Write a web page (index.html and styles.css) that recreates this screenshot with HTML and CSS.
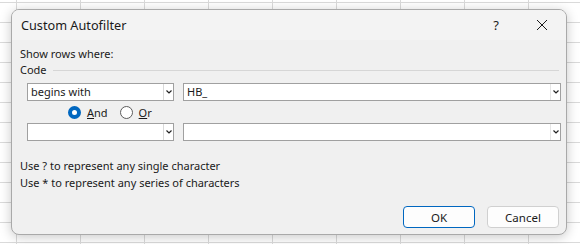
FILE: index.html
```html
<!DOCTYPE html>
<html lang="en">
<head>
    <meta charset="UTF-8">
    <title>Custom Autofilter</title>
    <link rel="stylesheet" href="styles.css">
</head>
<body>
    <div class="sheet">
        <div class="dialog">
            <div class="titlebar">
                <span class="title">Custom Autofilter</span>
                <span class="help">?</span>
                <span class="close">
                    <svg width="12" height="12" viewBox="0 0 12 12"><path d="M1 1 L11 11 M11 1 L1 11" stroke="#1a1a1a" stroke-width="1" fill="none"/></svg>
                </span>
            </div>
            <div class="content">
                <div class="caption">Show rows where:</div>
                <div class="group"><span>Code</span></div>

                <div class="criteria">
                    <div class="combo op">
                        <span class="value">begins with</span>
                        <span class="arrow"><svg width="6" height="4" viewBox="0 0 6 4"><path d="M0.5 0.5 L3 3 L5.5 0.5" stroke="#222" stroke-width="1.2" fill="none"/></svg></span>
                    </div>
                    <div class="combo val">
                        <span class="value">HB_</span>
                        <span class="arrow plain"><svg width="6" height="4" viewBox="0 0 6 4"><path d="M0.5 0.5 L3 3 L5.5 0.5" stroke="#222" stroke-width="1.2" fill="none"/></svg></span>
                    </div>
                </div>

                <div class="radios">
                    <label class="radio checked"><span class="dot"></span><span><u>A</u>nd</span></label>
                    <label class="radio"><span class="dot"></span><span><u>O</u>r</span></label>
                </div>

                <div class="criteria">
                    <div class="combo op">
                        <span class="value"></span>
                        <span class="arrow"><svg width="6" height="4" viewBox="0 0 6 4"><path d="M0.5 0.5 L3 3 L5.5 0.5" stroke="#222" stroke-width="1.2" fill="none"/></svg></span>
                    </div>
                    <div class="combo val">
                        <span class="value"></span>
                        <span class="arrow plain"><svg width="6" height="4" viewBox="0 0 6 4"><path d="M0.5 0.5 L3 3 L5.5 0.5" stroke="#222" stroke-width="1.2" fill="none"/></svg></span>
                    </div>
                </div>

                <div class="hints">
                    <div>Use ? to represent any single character</div>
                    <div>Use * to represent any series of characters</div>
                </div>

                <div class="buttons">
                    <button class="btn default">OK</button>
                    <button class="btn">Cancel</button>
                </div>
            </div>
        </div>
    </div>
</body>
</html>
```

FILE: styles.css
```css
/* Base */
* {
    box-sizing: border-box;
    margin: 0;
    padding: 0;
}
body {
    font-family: 'Noto Sans', 'Open Sans', sans-serif;
    font-size: 11px;
    color: #1a1a1a;
    background: #fff;
}
/* Spreadsheet behind the dialog */
.sheet {
    width: 580px;
    height: 244px;
    padding: 9px 0 0 11px;
    background-color: #fff;
    background-image:
        repeating-linear-gradient(to right, transparent 0, transparent 16px, #dadada 16px, #dadada 17px, transparent 17px, transparent 64px),
        repeating-linear-gradient(to bottom, transparent 0, transparent 2px, #dadada 2px, #dadada 3px, transparent 3px, transparent 20px);
    background-size: 64px 100%, 100% 20px;
}
/* Dialog */
.dialog {
    width: 556px;
    height: 226px;
    background: #f0f0f0;
    border: 1px solid #a9a9a9;
    border-radius: 8px;
    box-shadow: 0 2px 12px rgba(0,0,0,0.22);
    overflow: hidden;
}
.titlebar {
    height: 30px;
    background: #f3f3f3;
    display: flex;
    align-items: center;
    padding-left: 9px;
}
.title {
    flex: 1;
    font-size: 12.7px;
}
.help {
    width: 46px;
    text-align: center;
    font-size: 13px;
    margin-right: 0;
}
.close {
    width: 46px;
    display: flex;
    justify-content: center;
    align-items: center;
    margin-right: 1px;
}
/* Body */
.content {
    padding: 6px 0 0 8px;
}
.caption,
.group {
    line-height: 16px;
    height: 16px;
}
.group {
    display: flex;
    align-items: center;
}
.group::after {
    content: "";
    flex: 1;
    height: 1px;
    background: #d6d6d6;
    margin: 0 7px 0 6px;
}
.criteria {
    display: flex;
    margin: 5px 0 0 7px;
    gap: 9px;
}
.criteria + .radios {
    margin-top: 3px;
}
.radios + .criteria {
    margin-top: 3px;
}
.combo {
    height: 18px;
    background: #fff;
    border: 1px solid #a0a0a0;
    display: flex;
    align-items: center;
}
.combo.op {
    width: 147px;
}
.combo.val {
    width: 378px;
}
.combo .value {
    flex: 1;
    padding-left: 3px;
    line-height: 16px;
}
.combo .arrow {
    width: 10px;
    height: 100%;
    border-left: 1px solid #d9d9d9;
    display: flex;
    align-items: center;
    justify-content: center;
}
.combo .arrow.plain {
    border-left-color: #e6e6e6;
}
/* Radio buttons */
.radios {
    display: flex;
    height: 16px;
    align-items: center;
    padding-left: 48px;
}
.radio {
    display: flex;
    align-items: center;
    margin-right: 12px;
}
.radio .dot {
    width: 13px;
    height: 13px;
    border-radius: 50%;
    border: 1px solid #5c5c5c;
    background: #fff;
    margin-right: 6px;
}
.radio.checked .dot {
    border: 4px solid #0067c0;
    background: #fff;
}
/* Hints */
.hints {
    margin-top: 16px;
    line-height: 17px;
}
/* Buttons */
.buttons {
    display: flex;
    justify-content: flex-end;
    gap: 12px;
    margin-top: 15px;
    padding-right: 7px;
}
.btn {
    width: 72px;
    height: 22px;
    font-family: inherit;
    font-size: 11.5px;
    color: #1a1a1a;
    background: #fdfdfd;
    border: 1px solid #d0d0d0;
    border-radius: 4px;
}
.btn.default {
    border: 1px solid #0067c0;
}
```
